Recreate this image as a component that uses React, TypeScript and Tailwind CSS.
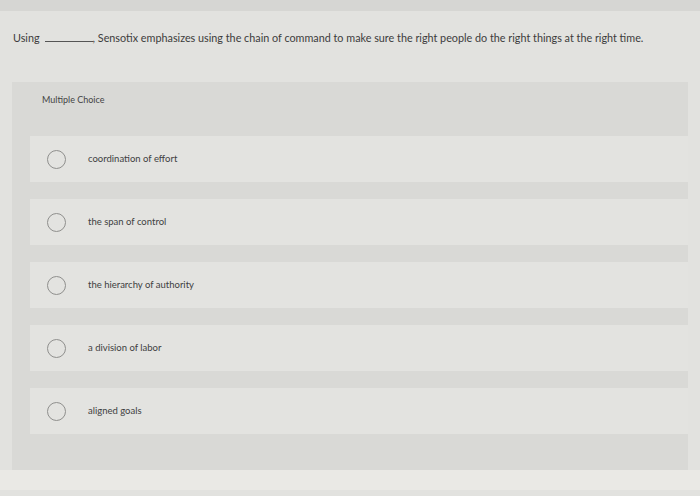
const options = [
  "coordination of effort",
  "the span of control",
  "the hierarchy of authority",
  "a division of labor",
  "aligned goals",
]

export default function App() {
  return (
    <div className="w-[700px] h-[496px] overflow-hidden bg-[#e2e2df] font-['Lato',sans-serif] text-[#3c3c3c]">
      <div className="h-[11px] bg-[#d6d6d3]" />
      <div className="pl-[13px] pt-[19px] h-[71px] text-[10.8px]">
        Using<span className="inline-block ml-[5px] w-[48px] border-b border-[#555] align-baseline" />, Sensotix emphasizes using the chain of command to make sure the right people do the right things at the right time.
      </div>
      <div className="mx-[12px] h-[388px] bg-[#d9d9d6] pt-[11px]">
        <div className="pl-[30px] text-[9px] text-[#444] h-[43px]">Multiple Choice</div>
        <div className="flex flex-col gap-[17px] pl-[18px]">
          {options.map((o) => (
            <div key={o} className="h-[46px] bg-[#e3e3e0] flex items-center">
              <div className="ml-[17px] w-[19px] h-[19px] rounded-full border border-[#8f8f8d]" />
              <span className="ml-[22px] text-[9.5px] text-[#404040]">{o}</span>
            </div>
          ))}
        </div>
      </div>
      <div className="h-[20px] bg-[#eae9e5]" />
    </div>
  )
}
